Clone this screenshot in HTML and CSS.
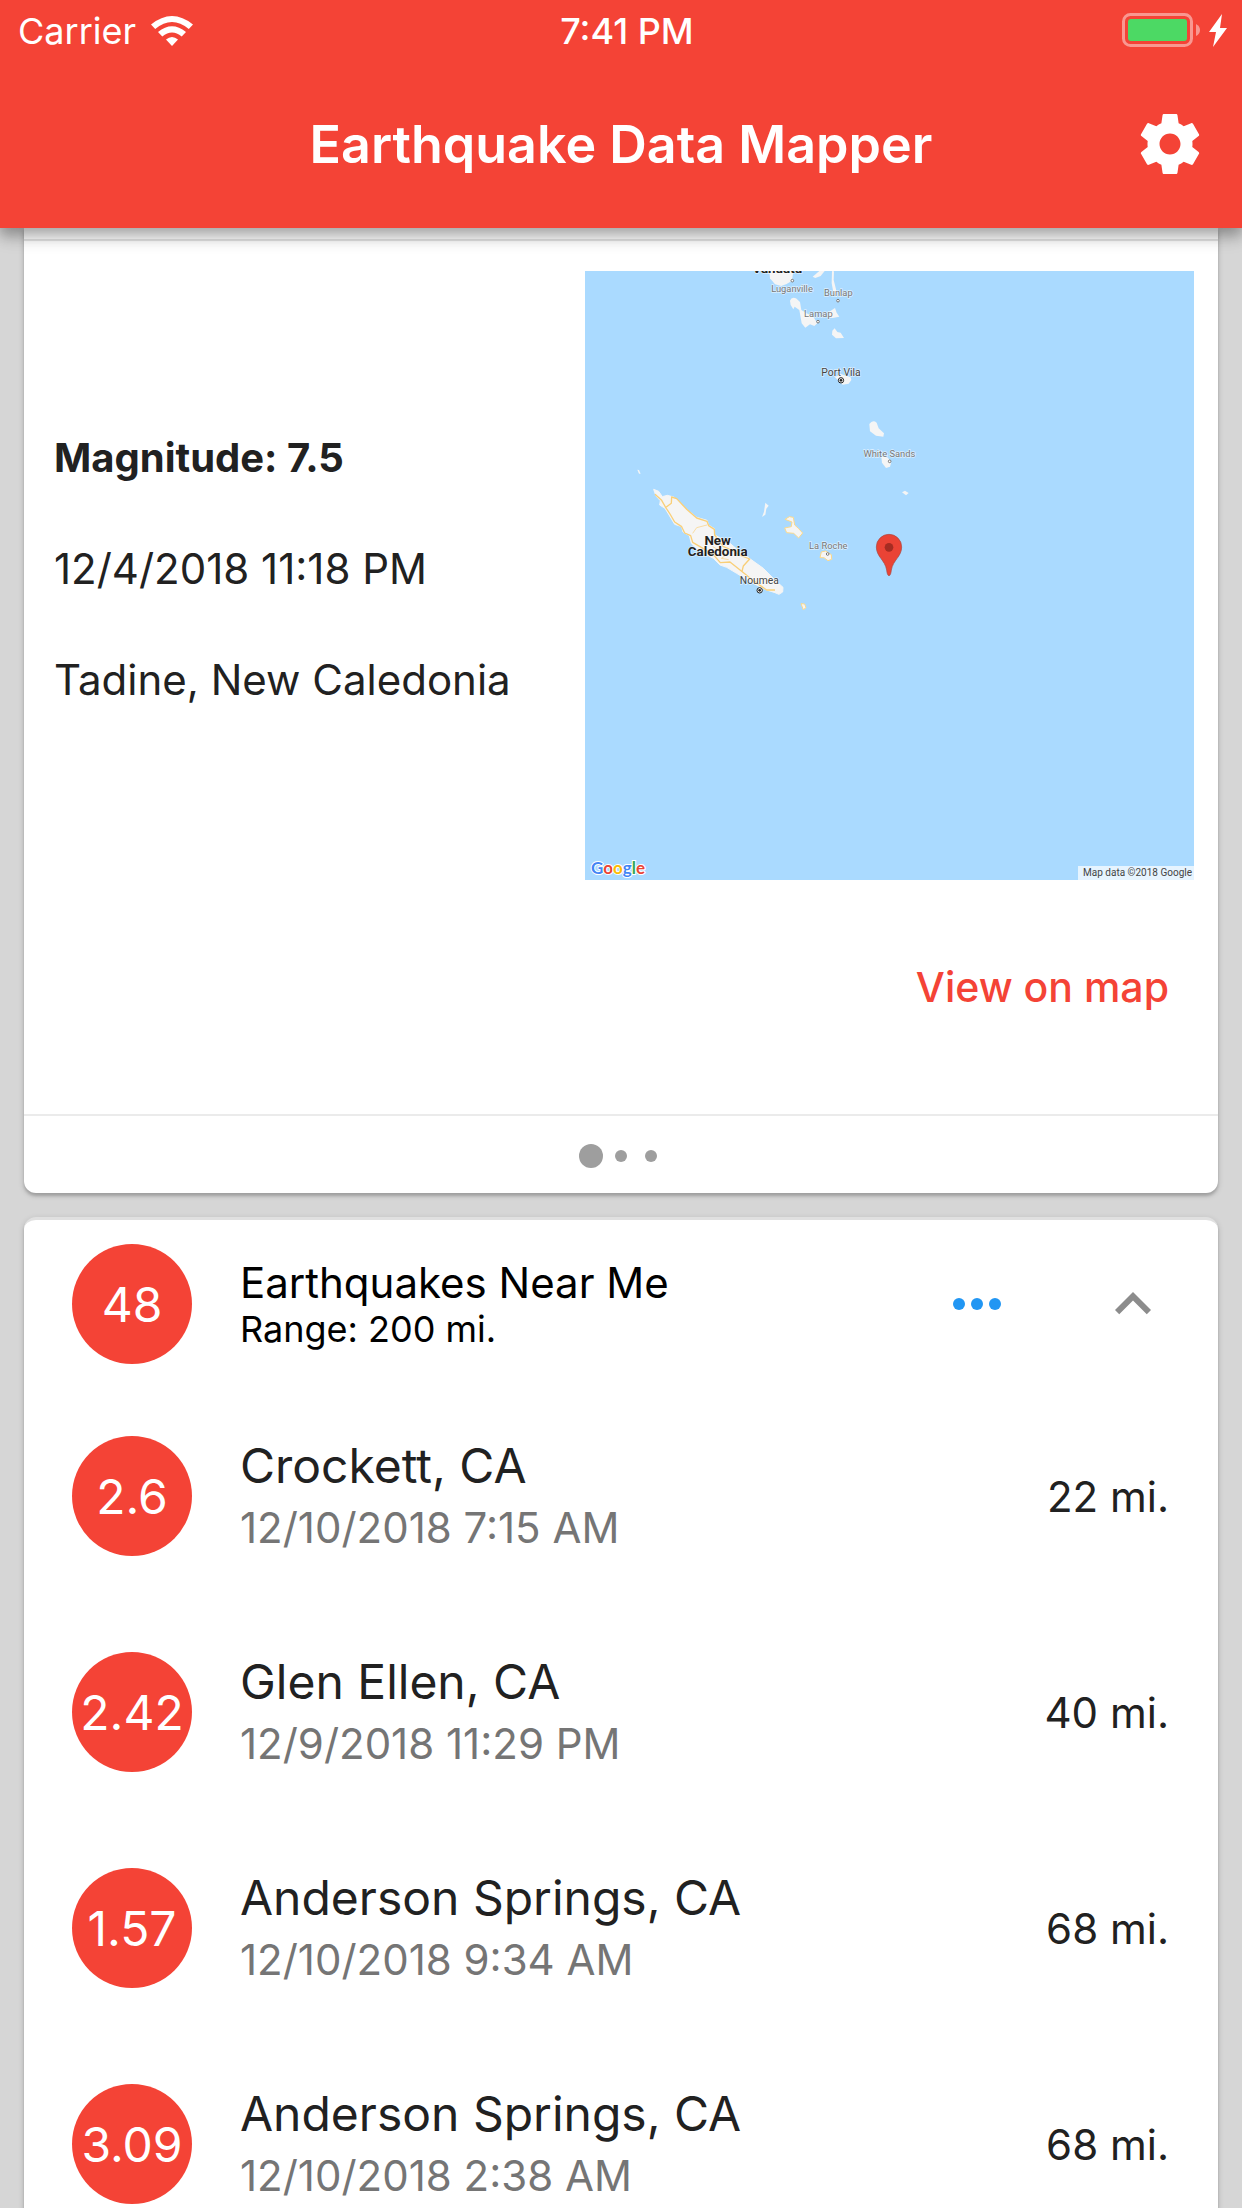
FILE: index.html
```html
<!DOCTYPE html>
<html lang="en">
<head>
<meta charset="utf-8">
<meta name="viewport" content="width=device-width, initial-scale=1">
<title>Earthquake Data Mapper</title>
<link rel="stylesheet" href="styles.css">
</head>
<body>
<div class="app">
  <header class="app-header">
    <div class="status-bar">
      <div class="status-left">
        <span>Carrier</span>
        <svg class="wifi" viewBox="0 0 42 30" aria-hidden="true">
          <path d="M21 30L15 23.500Q21 18.500 27 23.500Z"/>
          <path d="M7 16Q21 4.500 35 16L30.700 20.400Q21 12.500 11.300 20.400Z"/>
          <path d="M0 8.500Q21 -8.500 42 8.500L37.800 13Q21 -1 4.200 13Z"/>
        </svg>
      </div>
      <span class="status-time">7:41 PM</span>
      <div class="status-right">
        <svg class="battery" viewBox="0 0 106 36" aria-hidden="true">
          <rect x="1.500" y="1.500" width="68" height="31" rx="7" fill="none" stroke="#fff" stroke-opacity=".45" stroke-width="3"/>
          <rect x="6" y="6" width="59" height="22" rx="3" fill="#4cd964"/>
          <path d="M74 11q4 2 4 6t-4 6z" fill="#fff" fill-opacity=".45"/>
          <path d="M100 1L87 19h7l-3 15 14-19h-7z" fill="#fff"/>
        </svg>
      </div>
    </div>
    <div class="toolbar">
      <h1 class="toolbar-title">Earthquake Data Mapper</h1>
      <button class="icon-button" type="button" aria-label="Settings">
        <svg viewBox="0 0 24 24" aria-hidden="true"><path fill="#fff" d="M19.430 12.980c.04-.32.070-.64.070-.98s-.03-.66-.07-.98l2.110-1.650c.19-.15.240-.42.120-.64l-2-3.460c-.12-.22-.39-.3-.61-.22l-2.490 1c-.52-.4-1.080-.73-1.690-.98l-.38-2.650C14.460 2.180 14.250 2 14 2h-4c-.25 0-.46.180-.49.420l-.38 2.650c-.61.250-1.170.590-1.690.980l-2.490-1c-.23-.09-.49 0-.61.220l-2 3.460c-.13.220-.07.490.12.640l2.110 1.650c-.04.320-.07.650-.07.980s.03.660.070.980l-2.110 1.650c-.19.150-.24.420-.12.640l2 3.460c.12.220.39.300.61.220l2.490-1c.52.400 1.080.730 1.690.980l.38 2.650c.03.240.24.420.49.420h4c.25 0 .46-.18.490-.42l.38-2.650c.61-.25 1.170-.59 1.690-.98l2.490 1c.23.090.49 0 .61-.22l2-3.460c.12-.22.070-.49-.12-.64l-2.110-1.650zM12 15.500c-1.930 0-3.500-1.570-3.500-3.500s1.570-3.500 3.500-3.500 3.500 1.570 3.500 3.500-1.570 3.500-3.500 3.500z"/></svg>
      </button>
    </div>
  </header>

  <main class="content">
    <section class="card feature-card">
      <div class="feature-top"></div>
      <div class="feature-body">
        <div class="feature-info">
          <h2 class="feature-magnitude">Magnitude: 7.5</h2>
          <p>12/4/2018 11:18 PM</p>
          <p>Tadine, New Caledonia</p>
        </div>
        <svg class="map" viewBox="0 0 609 609" role="img" aria-label="Map of New Caledonia">
          <rect width="609" height="609" fill="#aadaff"/>
          <g transform="translate(-5 -11) scale(.33333)">
            <g fill="#f5f5f5">
              <path d="M568 33H640L636 62 620 72 604 78 585 73 570 55Z"/>
              <path d="M698 50L718 33H734L722 48 706 54Z"/>
              <path d="M756 33L762 34 761 60 768 88 770 112 760 96 755 70Z"/>
              <path d="M630 122Q634 110 648 115L660 126 664 150 680 160 700 170 712 190 703 198 690 193 676 203 665 190 658 150 644 140 640 148 632 135Z"/>
              <path d="M748 155L765 144 770 158 778 170 758 174 746 172Z"/>
              <path d="M757 212L764 205 772 216 782 218 792 234 768 235 756 224Z"/>
              <path d="M765 352L782 342 812 352 814 360 806 371 788 374 778 364Z"/>
              <path d="M868 492Q878 478 890 488L896 505 912 520 910 530 888 527 870 514Z"/>
              <path d="M904 590L922 592 934 605 930 620 918 624 906 608Z"/>
              <path d="M966 697L975 692 986 699 978 706Z"/>
              <path d="M172 629L177 630 182 641 177 641Z"/>
              <path d="M556 728L566 737 559 746 556 764 546 771 552 755Z"/>
            </g>
            <g fill="#f5f5f5" stroke="#fbd98c" stroke-width="3" stroke-linejoin="round">
              <path stroke="#f5f5f5" d="M221 688L236 694 247 710 262 706 281 711 300 727 320 748 350 772 381 781 386 795 403 806 404 825 450 850 485 880 508 895 550 925 590 965 609 982 608 996 597 1003 585 998 560 990 520 970 470 940 440 922 420 915 400 895 350 868 334 850 328 827 309 816 305 800 284 793 255 745 239 735 241 722 228 708Z"/>
              <path d="M615 778L628 770 640 772 644 795 655 805 668 819 656 834 641 820 620 818 614 804 634 800 636 786Z"/>
              <path d="M720 893L724 876 737 873 754 884 755 898 744 902 732 893Z"/>
              <path d="M663 1031L674 1032 678 1043 670 1049Z"/>
            </g>
            <g fill="none" stroke="#f9cf78" stroke-width="4" stroke-linejoin="round">
              <path d="M225 703L245 721 258 744 270 762 284 786 305 800 314 819 332 827 338 847 360 860 400 884 421 908 450 906 485 934 520 962 560 990 585 990"/>
              <path d="M258 742L274 730 275 711 290 716 320 748 350 774 381 784 386 797 403 808 404 825 430 860 455 870 478 885 509 897 490 918 486 934"/>
              <path stroke-width="2" d="M338 820L350 803 381 795M398 860L420 872 440 884 424 895 446 899"/>
            </g>
            <g class="map-label" font-size="28" fill="#777">
              <text x="636" y="95" text-anchor="middle">Luganville</text>
              <text x="775" y="109" text-anchor="middle">Bunlap</text>
              <text x="715" y="171" text-anchor="middle">Lamap</text>
              <text x="928" y="591" text-anchor="middle">White Sands</text>
              <text x="745" y="867" text-anchor="middle">La Roche</text>
            </g>
            <g class="map-label" font-size="31" fill="#444">
              <text x="783" y="347" text-anchor="middle">Port Vila</text>
              <text x="538" y="971" text-anchor="middle">Noumea</text>
            </g>
            <g class="map-label" font-size="40" font-weight="700" fill="#222">
              <text x="592" y="38" text-anchor="middle">Vanuatu</text>
              <text x="413" y="854" text-anchor="middle">New</text>
              <text x="413" y="888" text-anchor="middle">Caledonia</text>
            </g>
            <g fill="#fff" stroke="#777" stroke-width="3">
              <circle cx="637" cy="62" r="4"/><circle cx="774" cy="122" r="4"/><circle cx="714" cy="185" r="4"/><circle cx="929" cy="604" r="4"/><circle cx="743" cy="882" r="4"/>
            </g>
            <g fill="#fff" stroke="#222" stroke-width="3">
              <circle cx="783" cy="361" r="8"/><circle cx="539" cy="991" r="8"/>
            </g>
            <circle cx="783" cy="361" r="4" fill="#222"/><circle cx="539" cy="991" r="4" fill="#222"/>
            <path fill="#ea4335" stroke="#a8473f" stroke-width="2" d="M927 947C923 947 921 940 920 930 915 900 889 890 889 861a38 38 0 0 1 76 0C965 890 939 900 934 930 933 940 931 947 927 947Z"/>
            <circle cx="927" cy="862" r="13" fill="#a52c22"/>
          </g>
          <text class="map-logo" x="6" y="603"><tspan fill="#4285f4">G</tspan><tspan fill="#ea4335">o</tspan><tspan fill="#fbbc05">o</tspan><tspan fill="#4285f4">g</tspan><tspan fill="#34a853">l</tspan><tspan fill="#ea4335">e</tspan></text>
          <rect x="493" y="595" width="116" height="14" fill="#fff" fill-opacity=".7"/>
          <text class="map-credit" x="607" y="605" text-anchor="end">Map data ©2018 Google</text>
        </svg>
      </div>
      <div class="feature-actions">
        <button class="text-button" type="button">View on map</button>
      </div>
      <div class="pager">
        <span class="pager-dot pager-dot-active"></span>
        <span class="pager-dot"></span>
        <span class="pager-dot"></span>
      </div>
    </section>

    <section class="card list-card">
      <div class="list-header">
        <span class="badge">48</span>
        <div class="list-heading">
          <h2>Earthquakes Near Me</h2>
          <p>Range: 200 mi.</p>
        </div>
        <button class="icon-button" type="button" aria-label="More options">
          <svg viewBox="0 0 24 24" aria-hidden="true"><g fill="#2196f3"><circle cx="6" cy="12" r="2"/><circle cx="12" cy="12" r="2"/><circle cx="18" cy="12" r="2"/></g></svg>
        </button>
        <button class="icon-button" type="button" aria-label="Collapse list">
          <svg viewBox="0 0 24 24" aria-hidden="true"><path fill="#8c8c8c" d="M12 8l-6 6 1.410 1.410L12 10.830l4.590 4.580L18 14z"/></svg>
        </button>
      </div>
      <ul class="quake-list">
        <li class="quake">
          <span class="badge">2.6</span>
          <div class="quake-text"><h3>Crockett, CA</h3><p>12/10/2018 7:15 AM</p></div>
          <span class="distance">22 mi.</span>
        </li>
        <li class="quake">
          <span class="badge">2.42</span>
          <div class="quake-text"><h3>Glen Ellen, CA</h3><p>12/9/2018 11:29 PM</p></div>
          <span class="distance">40 mi.</span>
        </li>
        <li class="quake">
          <span class="badge">1.57</span>
          <div class="quake-text"><h3>Anderson Springs, CA</h3><p>12/10/2018 9:34 AM</p></div>
          <span class="distance">68 mi.</span>
        </li>
        <li class="quake">
          <span class="badge">3.09</span>
          <div class="quake-text"><h3>Anderson Springs, CA</h3><p>12/10/2018 2:38 AM</p></div>
          <span class="distance">68 mi.</span>
        </li>
      </ul>
    </section>
  </main>
</div>
</body>
</html>
```
FILE: styles.css
```css
* { box-sizing: border-box; }

body, h1, h2, h3, p, ul { margin: 0; padding: 0; }

body {
  background: #d6d6d6;
  color: #212121;
  font-family: Inter, Roboto, "Liberation Sans", sans-serif;
  font-size: 42px;
}

button {
  border: 0;
  padding: 0;
  background: none;
  font: inherit;
  cursor: pointer;
}

svg { display: block; }

.app {
  display: flex;
  flex-direction: column;
  height: 100vh;
}

/* Header */
.app-header {
  position: relative;
  z-index: 1;
  flex: none;
  background: #f44336;
  color: #fff;
  box-shadow: 0 6px 12px rgba(0, 0, 0, .24), 0 12px 15px rgba(0, 0, 0, .1), 0 3px 24px rgba(0, 0, 0, .08);
}

.status-bar {
  display: grid;
  grid-template-columns: 1fr auto 1fr;
  align-items: center;
  height: 60px;
  padding: 2px 14px 0 18px;
  font-size: 36px;
}

.status-left { display: flex; align-items: center; gap: 15px; }
.status-time { padding-left: 8px; font-weight: 500; }
.status-right { display: flex; justify-content: flex-end; }
.wifi { width: 42px; height: 30px; fill: #fff; }
.battery { width: 106px; height: 36px; }

.toolbar {
  display: grid;
  grid-template-columns: 1fr auto 1fr;
  align-items: center;
  height: 168px;
  padding: 0 36px;
}

.toolbar-title { grid-column: 2; font-size: 52px; font-weight: 600; }
.toolbar .icon-button { justify-self: end; }

.icon-button svg { width: 72px; height: 72px; }

/* Scrolling content */
.content {
  flex: 1;
  min-height: 0;
  padding: 0 24px;
  overflow-y: auto;
  scrollbar-width: none;
}

.card {
  border-radius: 12px;
  background: #fff;
  box-shadow: 0 3px 3px rgba(0, 0, 0, .16), 0 2px 6px rgba(0, 0, 0, .16);
}

.feature-card { border-radius: 0 0 12px 12px; }
.feature-top { height: 13px; border-bottom: 2px solid #e4e4e4; }

.feature-body {
  display: grid;
  grid-template-columns: 531fr 609fr;
  align-items: center;
  padding: 30px 24px 0 30px;
}

.feature-info { display: grid; gap: 60px; line-height: 51px; margin-top: -14px; }
.feature-magnitude { font-size: 40px; font-weight: 700; }
.feature-info p { font-size: 42px; }

.map { width: 100%; height: auto; }
.map-label, .map-credit { font-family: Roboto, sans-serif; }
.map-label text { paint-order: stroke; stroke: #fff; stroke-width: 4px; stroke-opacity: .6; }
.map-credit { fill: #444; font-size: 10px; }
.map-logo {
  font: 700 17px Lato, sans-serif;
  paint-order: stroke;
  stroke: #fff;
  stroke-width: 2px;
}

.feature-actions {
  display: flex;
  justify-content: flex-end;
  padding: 53px 49px 73px;
}

.text-button {
  height: 108px;
  color: #f44336;
  font-size: 41px;
  font-weight: 500;
}

.pager {
  display: flex;
  justify-content: center;
  align-items: center;
  height: 79px;
  padding-top: 2px;
  border-top: 2px solid #ebebeb;
}

.pager-dot { display: grid; place-items: center; width: 30px; height: 24px; }
.pager-dot::before { content: ""; width: 12px; height: 12px; border-radius: 50%; background: #9e9e9e; }
.pager-dot-active::before { width: 24px; height: 24px; }

/* List of nearby earthquakes */
.list-card { margin-top: 24px; border-top: 3px solid #e0e0e0; }

.list-header, .quake {
  display: flex;
  align-items: center;
  padding: 0 49px 0 48px;
}

.list-header { height: 168px; color: #000; }
.list-header .icon-button { flex: none; }
.list-header .icon-button + .icon-button { margin-left: 84px; }

.badge {
  display: grid;
  flex: none;
  place-items: center;
  width: 120px;
  height: 120px;
  margin-right: 48px;
  border-radius: 50%;
  background: #f44336;
  color: #fff;
  font-size: 48px;
}

.list-heading { flex: 1; }
.list-heading h2 { font-size: 42px; font-weight: 400; line-height: 50px; }
.list-heading p { font-size: 36px; line-height: 43px; }

.quake-list { list-style: none; }
.quake { height: 216px; }
.quake-text { flex: 1; padding-top: 3px; }
.quake-text h3 { font-size: 48px; font-weight: 400; line-height: 60px; }
.quake-text p { color: #757575; font-size: 42px; line-height: 63px; }
.distance { font-size: 42px; }
```
